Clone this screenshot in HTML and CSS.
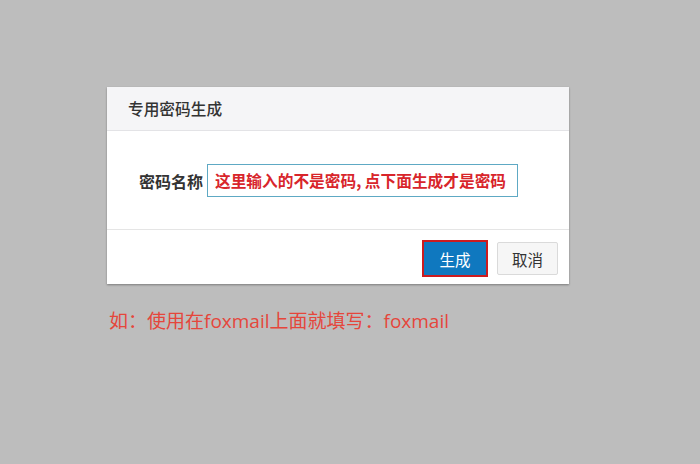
FILE: index.html
```html
<!DOCTYPE html>
<html lang="zh-CN">
<head>
<meta charset="utf-8">
<link rel="stylesheet" href="styles.css">
</head>
<body>
<div class="page">
  <div class="dialog">
    <div class="dialog-header">专用密码生成</div>
    <div class="dialog-body">
      <label class="field-label">密码名称</label>
      <div class="field-input">这里输入的不是密码, 点下面生成才是密码</div>
    </div>
    <div class="dialog-footer">
      <button class="btn btn-primary">生成</button>
      <button class="btn btn-default">取消</button>
    </div>
  </div>
  <p class="note">如：使用在foxmail上面就填写：foxmail</p>
</div>
</body>
</html>
```

FILE: styles.css
```css
html, body {
  margin: 0;
  padding: 0;
  background: #bdbdbd;
  font-family: "Noto Sans CJK SC", "Open Sans", sans-serif;
}
.page {
  padding: 87px 0 0 107px;
}
.dialog {
  width: 462px;
  background: #fff;
  box-shadow: 0 1px 2px rgba(0,0,0,0.35);
}
.dialog-header {
  height: 43px;
  line-height: 43px;
  padding-left: 21px;
  background: #f5f5f7;
  border-bottom: 1px solid #e3e3e6;
  font-size: 15.7px;
  font-weight: 500;
  color: #333;
}
.dialog-body {
  display: flex;
  align-items: center;
  padding: 33px 0 32px 32px;
}
.field-label {
  font-size: 16px;
  font-weight: 700;
  color: #333;
  width: 68px;
}
.field-input {
  box-sizing: border-box;
  width: 311px;
  height: 33px;
  line-height: 31px;
  border: 1px solid #5ea9c4;
  padding-left: 7px;
  font-size: 15.7px;
  font-weight: 700;
  color: #d8252b;
  white-space: nowrap;
  overflow: hidden;
}
.dialog-footer {
  box-sizing: border-box;
  height: 55px;
  border-top: 1px solid #e5e5e5;
  display: flex;
  justify-content: flex-end;
  align-items: center;
  gap: 9px;
  padding: 3px 11px 0 0;
}
.btn {
  box-sizing: border-box;
  font-family: "Noto Sans CJK SC", sans-serif;
  font-size: 15.5px;
  margin: 0;
  padding: 0;
  cursor: pointer;
}
.btn-primary {
  width: 66px;
  height: 37px;
  background: #0f78bf;
  color: #fff;
  border: 2px solid #cc1b1f;
}
.btn-default {
  width: 61px;
  height: 33px;
  background: #f6f6f6;
  color: #333;
  border: 1px solid #dadada;
  border-radius: 2px;
}
.note {
  margin: 22px 0 0 2px;
  font-family: "Open Sans", "Noto Sans CJK SC", sans-serif;
  font-size: 19px;
  color: #e5463b;
}
```
